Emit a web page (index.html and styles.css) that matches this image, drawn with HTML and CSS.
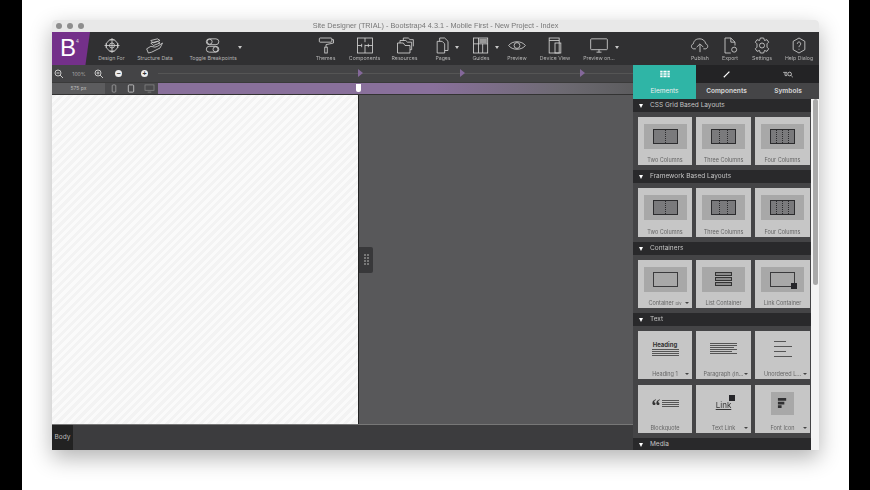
FILE: index.html
```html
<!DOCTYPE html>
<html lang="en">
<head>
<meta charset="utf-8">
<title>Site Designer</title>
<link rel="stylesheet" href="styles.css">
</head>
<body>
<div class="stage">
<div class="window">
  <header class="titlebar">
    <div class="lights"><i></i><i></i><i></i></div>
    <div class="title">Site Designer (TRIAL) - Bootstrap4 4.3.1 - Mobile First - New Project - Index</div>
  </header>
  <nav class="toolbar">
    <div class="logo"><span class="logo-b">B</span><sup class="logo-4">4</sup></div>
    <div class="tool"><svg viewBox="0 0 24 20"><circle cx="12" cy="10" r="7"/><circle cx="12" cy="10" r="3"/><path d="M12 1v18M3 10h18M9 3h6M9 17h6M5 7v6M19 7v6"/></svg><span>Design For</span></div>
    <div class="tool"><svg viewBox="0 0 24 20"><path d="M7 4l8-2 3 2-8 3zM7 7l8-2 3 2-8 3zM2 14l5-3 5 1 3-1 6-4-3 6-6 3-4 2-4 1z"/></svg><span>Structure Data</span></div>
    <div class="tool caret-tool"><svg viewBox="0 0 24 20"><rect x="4" y="2" width="15" height="7" rx="3.5"/><rect x="4" y="11" width="15" height="7" rx="3.5"/><circle cx="8" cy="5.500" r="3"/><circle cx="15" cy="14.500" r="3"/></svg><span>Toggle Breakpoints</span><b class="caret caret-far"></b></div>
    <div class="tool-gap"></div>
    <div class="tool"><svg viewBox="0 0 24 20"><rect x="4" y="1" width="15" height="5" rx="1"/><path d="M19 3h2v4l-9 2v3"/><rect x="10.500" y="12" width="3" height="7"/></svg><span>Themes</span></div>
    <div class="tool"><svg viewBox="0 0 24 20"><rect x="3" y="1" width="18" height="18"/><path d="M12 1v5M12 9v10M3 10h5M12 10h9M8 8v4M16 8v4"/></svg><span>Components</span></div>
    <div class="tool"><svg viewBox="0 0 24 20"><path d="M3 7h7l2 3h6v9H3zM6 7V4h7l2 2h5v9h-2M10 4V1h6l2 2h4v8"/></svg><span>Resources</span></div>
    <div class="tool caret-tool"><svg viewBox="0 0 24 20"><path d="M8 5V1h6l4 4v11h-4M5 5h6l3 3v11H5z"/></svg><span>Pages</span><b class="caret"></b></div>
    <div class="tool caret-tool"><svg viewBox="0 0 24 20"><rect x="3" y="1" width="17" height="18"/><path d="M3 8h17M9 1v18M14 8v11"/><rect class="fill" x="10" y="2" width="9" height="5"/></svg><span>Guides</span><b class="caret"></b></div>
    <div class="tool"><svg viewBox="0 0 24 20"><path d="M2 10c4-6 16-6 20 0-4 6-16 6-20 0z"/><circle cx="12" cy="10" r="3.500"/></svg><span>Preview</span></div>
    <div class="tool"><svg viewBox="0 0 24 20"><rect x="5" y="1" width="12" height="18"/><rect x="12" y="7" width="7" height="12"/><path d="M5 4h12"/></svg><span>Device View</span></div>
    <div class="tool caret-tool"><svg viewBox="0 0 24 20"><rect x="2" y="2" width="20" height="13" rx="1"/><path d="M9 18h6M12 15v3"/></svg><span>Preview on...</span><b class="caret"></b></div>
    <div class="tool-gap"></div>
    <div class="tool"><svg viewBox="0 0 24 20"><path d="M7 14H4c-3-1-3-5 0-6 1-5 4-6 8-6 3 0 6 2 7 6 3 1 3 5 0 6h-3"/><path d="M12 18v-9M8 12l4-4 4 4"/></svg><span>Publish</span></div>
    <div class="tool"><svg viewBox="0 0 24 20"><path d="M6 1h7l5 5v4M6 1v18h7M13 1v5h5"/><rect x="14" y="12" width="6" height="6" rx="3"/></svg><span>Export</span></div>
    <div class="tool"><svg viewBox="0 0 24 20"><circle cx="12" cy="10" r="3"/><path d="M10 1h4l1 3 3-1 2 3-2 2v4l2 2-2 3-3-1-1 3h-4l-1-3-3 1-2-3 2-2V8L4 6l2-3 3 1z"/></svg><span>Settings</span></div>
    <div class="tool"><svg viewBox="0 0 24 20"><path d="M12 1l7 4v10l-7 4-7-4V5z"/><path d="M10 8c0-3 4-3 4 0 0 2-2 2-2 4M12 14v1"/></svg><span>Help Dialog</span></div>
  </nav>
  <div class="workspace">
    <section class="editor">
      <div class="zoombar">
        <div class="zoom-tools">
          <svg class="mag" viewBox="0 0 10 10"><circle cx="4" cy="4" r="3"/><path d="M6 6l3 3M2.500 4h3"/></svg>
          <span class="pct">100%</span>
          <svg class="mag" viewBox="0 0 10 10"><circle cx="4" cy="4" r="3"/><path d="M6 6l3 3M2.500 4h3M4 2.500v3"/></svg>
          <span class="round">&minus;</span>
          <span class="round plus">+</span>
        </div>
        <div class="timeline">
          <i class="marker m1"></i><i class="marker m2"></i><i class="marker m3"></i>
        </div>
      </div>
      <div class="rulerbar">
        <div class="px">575 px</div>
        <div class="devices">
          <svg viewBox="0 0 8 10" class="d1"><rect x="2" y="1" width="4" height="8" rx="1"/></svg>
          <svg viewBox="0 0 8 10" class="d2"><rect x="1" y="1" width="6" height="8" rx="1"/></svg>
          <svg viewBox="0 0 12 10" class="d3"><rect x="1" y="1" width="10" height="6"/><path d="M4 9h4"/></svg>
        </div>
        <div class="range"><i class="knob"></i></div>
      </div>
      <div class="canvas">
        <div class="page"></div>
        <div class="stagearea"><div class="handle"><i></i><i></i><i></i><i></i><i></i><i></i><i></i><i></i></div></div>
      </div>
      <footer class="crumbs"><span class="crumb">Body</span></footer>
    </section>
    <aside class="panel">
      <div class="tabs">
        <div class="tab active"><div class="tab-top"><svg viewBox="0 0 12 10" class="ti"><path class="solid" d="M0 1h3v2H0zM4 1h4v2H4zM9 1h3v2H9zM0 4h3v2H0zM4 4h4v2H4zM9 4h3v2H9zM0 7h3v2H0zM4 7h4v2H4zM9 7h3v2H9z"/></svg></div><div class="tab-label">Elements</div></div>
        <div class="tab"><div class="tab-top"><svg viewBox="0 0 12 10" class="ti"><path d="M2 9l2-2 5-5" class="brush"/></svg></div><div class="tab-label">Components</div></div>
        <div class="tab"><div class="tab-top"><svg viewBox="0 0 14 10" class="ti"><path d="M1 3h5M2 5h4M3 7h3" class="thin"/><circle cx="9" cy="5" r="2.300" class="thin"/><path d="M11 7l2 2" class="thin"/></svg></div><div class="tab-label">Symbols</div></div>
      </div>
      <div class="scroller">
        <div class="list">
          <h3 class="head">CSS Grid Based Layouts</h3>
          <div class="cards">
            <div class="card"><div class="thumb"><div class="lay"><i></i><i></i></div></div><span>Two Columns</span></div>
            <div class="card"><div class="thumb"><div class="lay"><i></i><i></i><i></i></div></div><span>Three Columns</span></div>
            <div class="card"><div class="thumb"><div class="lay"><i></i><i></i><i></i><i></i></div></div><span>Four Columns</span></div>
          </div>
          <h3 class="head">Framework Based Layouts</h3>
          <div class="cards">
            <div class="card"><div class="thumb"><div class="lay"><i></i><i></i></div></div><span>Two Columns</span></div>
            <div class="card"><div class="thumb"><div class="lay"><i></i><i></i><i></i></div></div><span>Three Columns</span></div>
            <div class="card"><div class="thumb"><div class="lay"><i></i><i></i><i></i><i></i></div></div><span>Four Columns</span></div>
          </div>
          <h3 class="head">Containers</h3>
          <div class="cards">
            <div class="card more"><div class="thumb"><div class="box"></div></div><span>Container <small>Div</small></span></div>
            <div class="card"><div class="thumb"><div class="stack"><i></i><i></i><i></i></div></div><span>List Container</span></div>
            <div class="card"><div class="thumb"><div class="box"><em class="badge"></em></div></div><span>Link Container</span></div>
          </div>
          <h3 class="head">Text</h3>
          <div class="cards">
            <div class="card more plain"><div class="art"><strong class="hd">Heading</strong><div class="lines"><i></i><i></i><i></i><i></i></div></div><span>Heading 1</span></div>
            <div class="card more plain"><div class="art"><div class="lines para"><i></i><i></i><i></i><i></i><i></i><i></i></div></div><span>Paragraph (in...</span></div>
            <div class="card more plain"><div class="art"><div class="lines ul"><i></i><i></i><i></i><i></i></div></div><span>Unordered L...</span></div>
            <div class="card plain"><div class="art quote"><b class="qm">&ldquo;</b><div class="lines q"><i></i><i></i><i></i><i></i></div></div><span>Blockquote</span></div>
            <div class="card more plain"><div class="art"><u class="lnk">Link<em class="badge"></em></u></div><span>Text Link</span></div>
            <div class="card more plain"><div class="art"><div class="fi"><svg viewBox="0 0 12 14"><path class="solid" d="M1 1h9v3H1zM1 5h7v3H1zM1 9h4v3H1z"/></svg></div></div><span>Font Icon</span></div>
          </div>
          <h3 class="head">Media</h3>
        </div>
        <div class="scrollbar"><i></i></div>
      </div>
    </aside>
  </div>
</div>
</div>
</body>
</html>
```

FILE: styles.css
```css
* { box-sizing: border-box; }
html, body { margin: 0; height: 100%; }
body { background: #000; font-family: "Inter", "Liberation Sans", sans-serif; overflow: hidden; }
.stage { width: 827px; height: 490px; margin-left: 22px; background: #fff; padding: 20px 30px 40px 30px; }
.window {
  width: 767px; height: 430px; display: grid; grid-template-rows: 12px 33px 385px;
  border-radius: 4px 4px 0 0;
  box-shadow: 0 8px 22px rgba(0,0,0,.3);
  filter: blur(.3px);
}

.titlebar { background: #e8e8e8; display: flex; align-items: center; position: relative; border-radius: 4px 4px 0 0; }
.lights { display: flex; gap: 5px; padding-left: 4px; }
.lights i { width: 6px; height: 6px; border-radius: 50%; background: #8e8e8e; }
.title { position: absolute; left: 0; right: 0; text-align: center; font: 7.300px/12px "Liberation Sans", sans-serif; color: #777; }

.toolbar {
  background: #303032; display: grid;
  grid-template-columns: 38px 43px 44px 72px 57px 39px 39px 41px 36px 40px 32px 44px 44px 64px 30px 30px 34px 40px;
}
.logo { background: #74308a; clip-path: polygon(0 0, 100% 0, 88% 100%, 0 100%); color: #fff; position: relative; }
.logo-b { position: absolute; left: 8px; top: 3px; font: 400 24px/26px "Liberation Sans", sans-serif; }
.logo-4 { position: absolute; left: 24px; top: 6px; font: 5px/6px "Liberation Sans", sans-serif; color: #ddd; }
.tool { display: flex; flex-direction: column; align-items: center; position: relative; padding-top: 5px; }
.tool svg { width: 20px; height: 17px; fill: none; stroke: #d4d4d4; stroke-width: 1; }
.tool svg .fill { fill: #999; stroke: none; }
.tool span { font-size: 5.200px; line-height: 7px; color: #b4b4b4; white-space: nowrap; margin-top: 1px; }
.caret { position: absolute; right: 2px; top: 14px; border: 2px solid transparent; border-top: 3px solid #c8c8c8; border-bottom: 0; }
.caret-far { right: 7px; }

.workspace { display: grid; grid-template-columns: 581px 186px; min-height: 0; }
.editor { display: grid; grid-template-rows: 17px 13px 329px 26px; min-width: 0; }

.zoombar { background: #444446; display: flex; }
.zoom-tools { width: 106px; display: flex; align-items: center; padding-left: 2px; }
.mag { width: 10px; height: 10px; fill: none; stroke: #c8c8c8; stroke-width: 1; flex: none; }
.pct { font-size: 5px; color: #a8a8a8; width: 30px; text-align: center; }
.zoom-tools .pct + .mag { margin-right: 11px; }
.round { width: 7px; height: 7px; border-radius: 50%; background: #eee; color: #333; font: 700 7px/7px "Liberation Sans", sans-serif; text-align: center; flex: none; }
.plus { margin-left: 19px; }
.timeline { flex: 1; position: relative; background: linear-gradient(#555,#555) center / 100% 1px no-repeat; }
.marker { position: absolute; top: 4px; border: 4px solid transparent; border-left: 5px solid #84689a; border-right: 0; }
.m1 { left: 200px; }
.m2 { left: 302px; }
.m3 { left: 422px; }

.rulerbar { background: #444446; display: flex; border-top: 1px solid #3a3a3a; border-bottom: 1px solid #333; }
.px { width: 53px; background: #5c5c5e; color: #bbb; font-size: 5px; line-height: 11px; text-align: center; }
.devices { width: 53px; display: grid; grid-template-columns: repeat(3, 1fr); align-items: center; justify-items: center; background: #4a4a4c; }
.devices svg { height: 9px; fill: none; stroke: #aaa; stroke-width: .8; }
.d1 { width: 8px; }
.d2 { width: 8px; stroke: #ddd !important; }
.d3 { width: 13px; stroke: #888 !important; }
.range { flex: 1; position: relative; background: linear-gradient(90deg, #89709b 0, #89709b 58%, #6d6a72 85%, #5c5c5e 100%); }
.knob { position: absolute; left: 198px; top: 1px; width: 5px; height: 8px; background: #fff; border-radius: 0 0 2px 2px; }

.canvas { display: flex; min-height: 0; }
.page {
  width: 307px; background-color: #f7f7f7;
  background-image: repeating-linear-gradient(135deg, #f3f3f3 0 3px, #fafafa 3px 6px);
  border-right: 1px solid #222;
}
.stagearea { flex: 1; background: #58585a; display: flex; align-items: center; position: relative; }
.handle {
  width: 14px; height: 26px; background: #38383a; border-radius: 0 2px 2px 0;
  display: grid; grid-template-columns: 2px 2px; gap: 1px; justify-content: center; align-content: center;
}
.handle i { width: 2px; height: 2px; background: #777; }

.crumbs { background: #3c3c3e; border-top: 1px solid #777; display: flex; }
.crumb { width: 21px; background: #222; color: #bbb; font-size: 6.500px; line-height: 25px; text-align: center; }

.panel { background: #444446; display: flex; flex-direction: column; min-height: 0; }
.tabs { display: grid; grid-template-columns: 63px 61px 62px; height: 34px; flex: none; }
.tab { display: flex; flex-direction: column; }
.tab-top { height: 18px; background: #232325; display: flex; align-items: center; justify-content: center; }
.tab-label { flex: 1; background: #454547; color: #d0d0d0; font-size: 6.500px; font-weight: 700; line-height: 16px; text-align: center; }
.active .tab-top, .active .tab-label { background: #2fb5a6; color: #eee; font-weight: 400; }
.ti { height: 8px; width: 12px; fill: none; stroke: #fff; }
.ti .solid { fill: #fff; stroke: none; }
.brush { stroke-width: 1.600; }
.thin { stroke-width: .8; }

.scroller { flex: 1; display: flex; min-height: 0; overflow: hidden; }
.list { width: 178px; background: #444446; flex: none; }
.scrollbar { width: 8px; background: #f4f4f4; padding: 0 1px 0 2px; }
.scrollbar i { display: block; height: 186px; background: #a9a9a9; border-radius: 3px; }

.head {
  margin: 0; height: 13px; background: #29292b; color: #c4c4c4;
  font-size: 6.500px; font-weight: 400; line-height: 13px; padding-left: 17px; position: relative;
}
.head::before {
  content: ""; position: absolute; left: 6px; top: 5px;
  border: 2.500px solid transparent; border-top: 4px solid #fff; border-bottom: 0;
}
.cards { display: grid; grid-template-columns: 54px 55px 55px; column-gap: 4px; row-gap: 6px; padding: 5px 0 5px 5px; }
.card { height: 48.300px; background: #c6c6c6; display: flex; flex-direction: column; align-items: center; position: relative; }
.card > span { font-size: 5.500px; line-height: 7px; color: #666; white-space: nowrap; position: absolute; left: 0; right: 0; bottom: 1px; text-align: center; }
.card small { font-size: 4px; }
.more::after {
  content: ""; position: absolute; right: 3px; bottom: 4px;
  border: 2px solid transparent; border-top: 2.500px solid #444; border-bottom: 0;
}
.thumb { width: 43px; height: 25px; margin-top: 7px; background: #a8a8a8; display: flex; align-items: center; justify-content: center; flex: none; }
.lay { width: 25px; height: 15px; border: 1px solid #2c2c2e; display: flex; background: #7a7a7c; }
.lay i { flex: 1; border-left: 1px dotted #2c2c2e; }
.lay i:first-child { border-left: 0; }
.box { width: 25px; height: 15px; border: 1px solid #3a3a3c; position: relative; }
.badge { position: absolute; right: -3px; bottom: -3px; width: 6px; height: 6px; background: #26262a; display: block; }
.stack { width: 17px; display: flex; flex-direction: column; gap: 1px; }
.stack i { height: 4px; border: 1px solid #333; background: #8a8a8a; }
.art { height: 36px; width: 100%; display: flex; flex-direction: column; align-items: center; justify-content: center; }
.hd { font-size: 6px; line-height: 8px; color: #333; }
.lines { width: 27px; display: flex; flex-direction: column; gap: 1px; }
.lines i { height: 1px; background: #555; }
.para i:nth-child(5) { width: 80%; }
.para i:nth-child(3) { width: 90%; }
.lines.ul { width: 18px; gap: 4px; }
.lines.ul i:nth-child(odd) { width: 70%; }
.quote { flex-direction: row; gap: 1px; }
.qm { font: 700 18px/14px "Liberation Serif", serif; color: #333; height: 8px; }
.lines.q { width: 17px; }
.lnk { font-size: 8px; line-height: 10px; color: #333; position: relative; margin-top: 4px; }
.lnk .badge { right: -4px; top: -5px; bottom: auto; }
.fi { width: 23px; height: 23px; background: #a8a8a8; display: flex; align-items: center; justify-content: center; }
.fi svg { width: 11px; height: 13px; }
.fi .solid { fill: #303032; }
```
